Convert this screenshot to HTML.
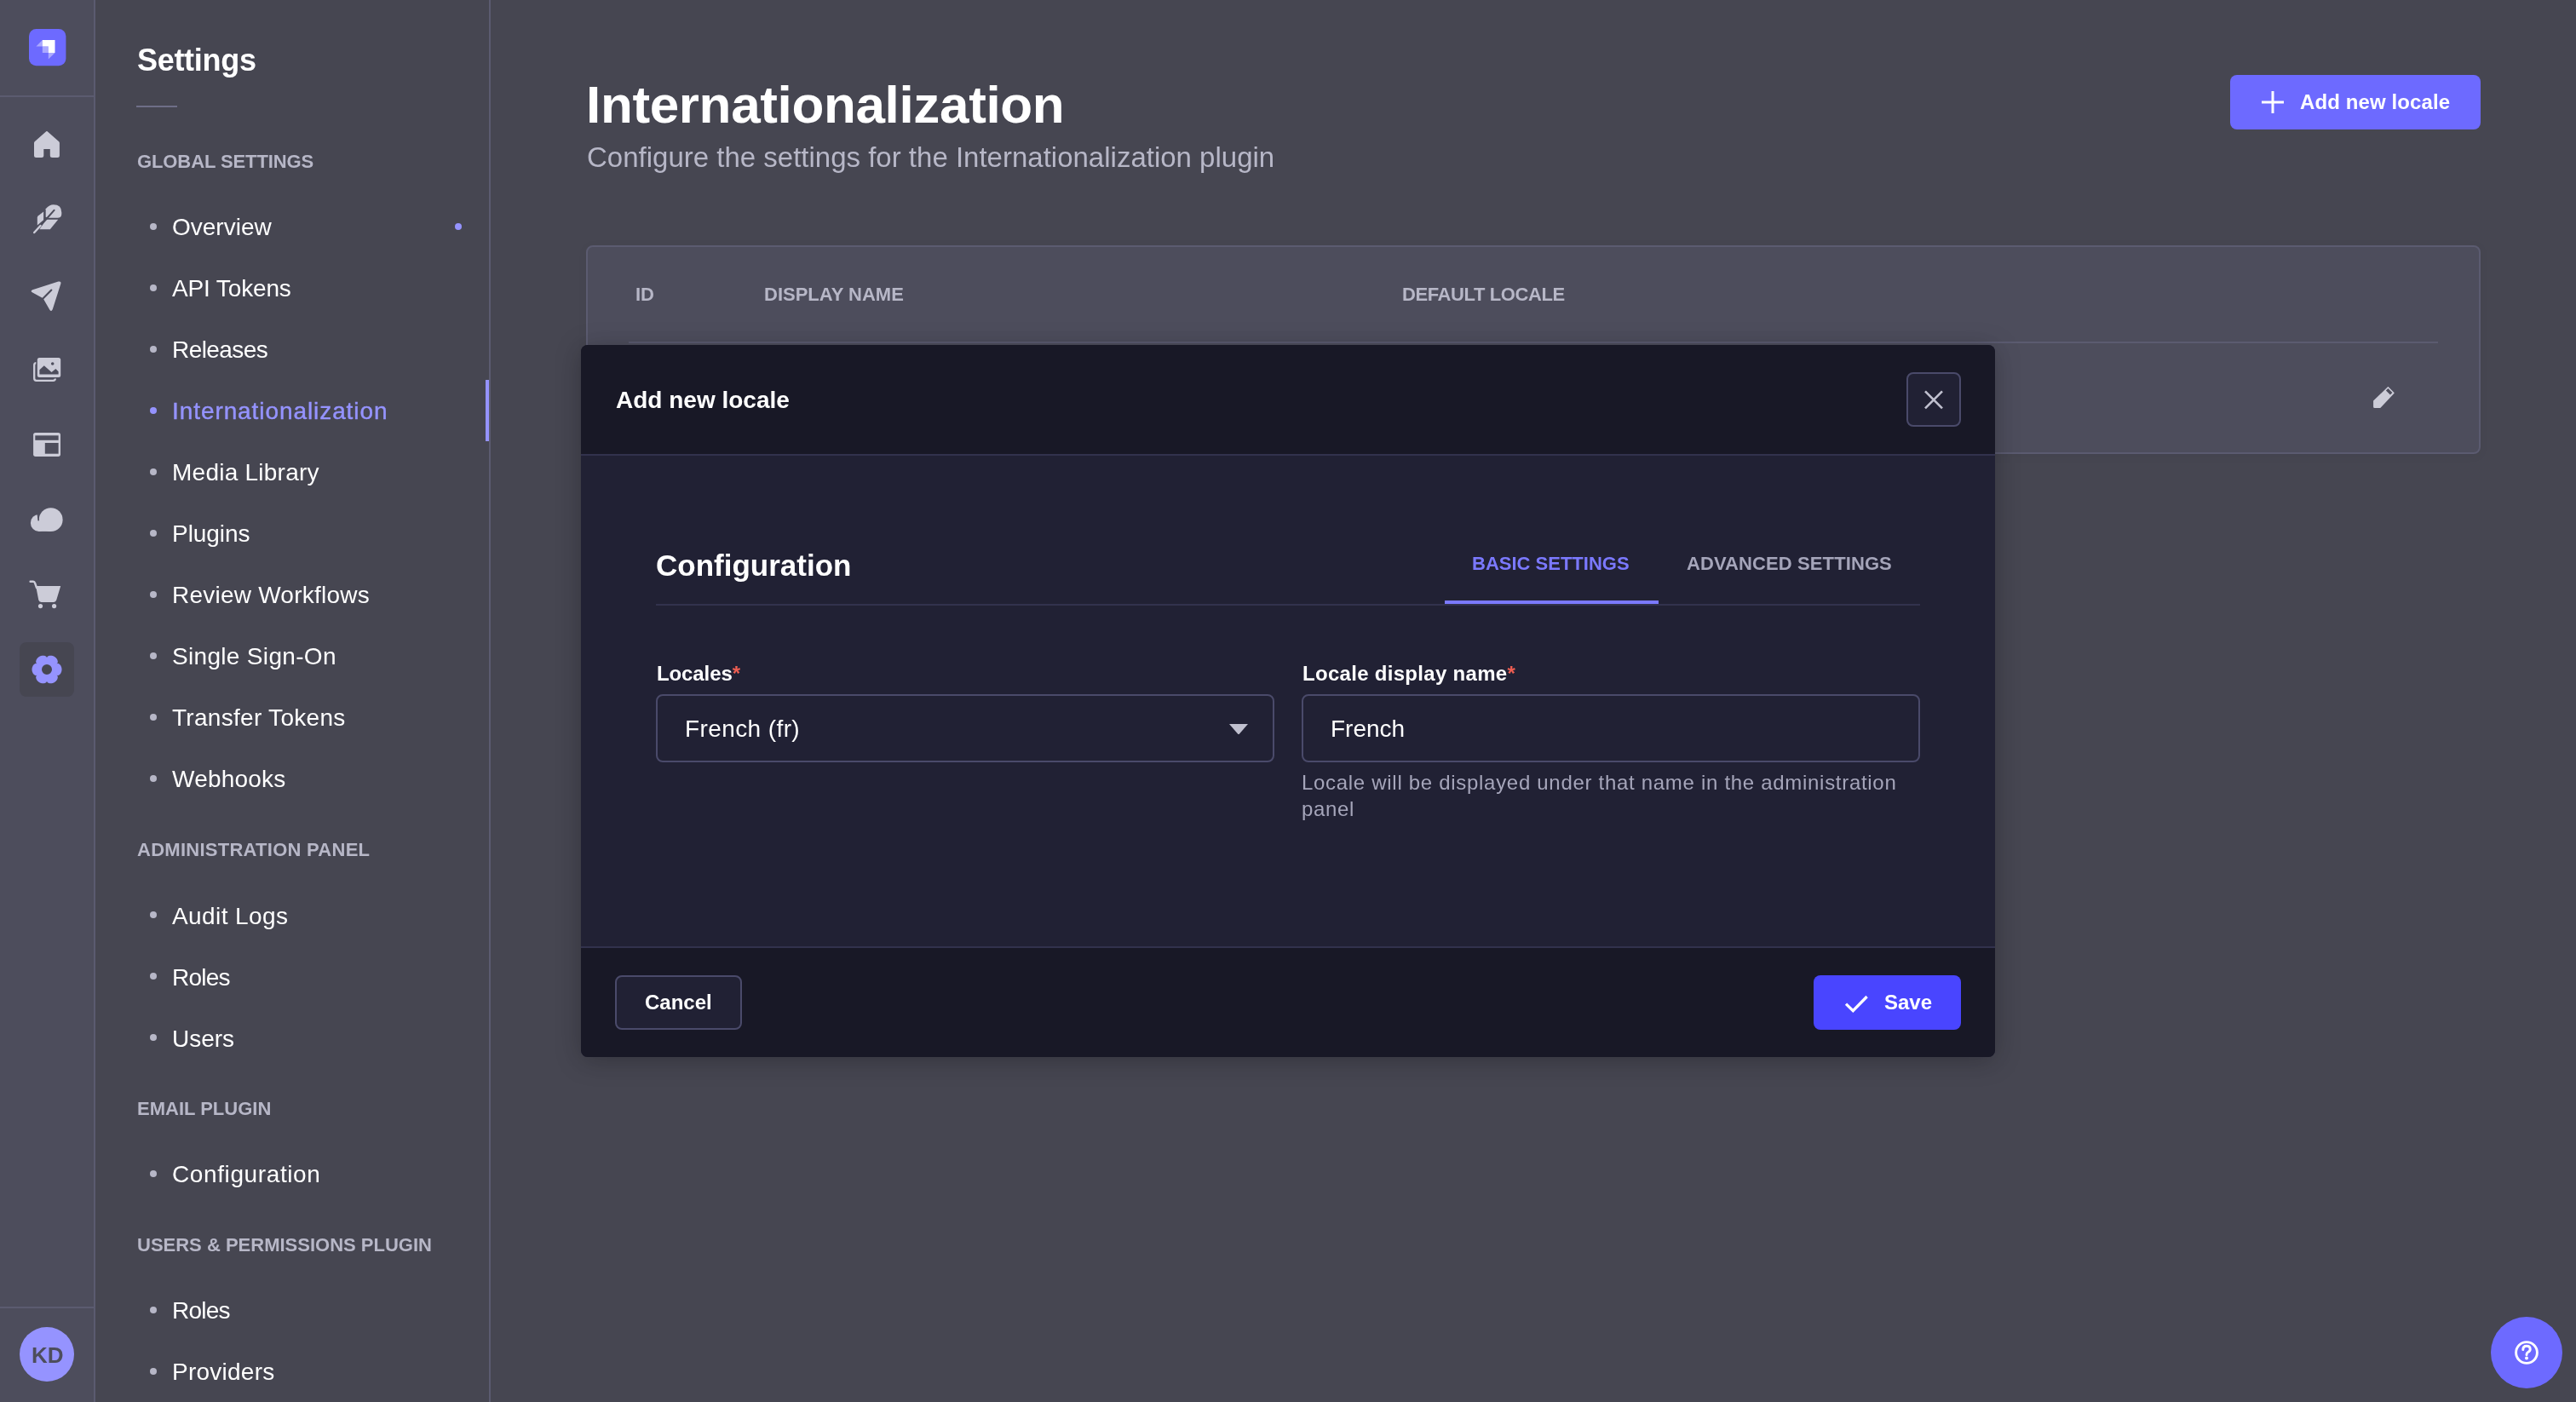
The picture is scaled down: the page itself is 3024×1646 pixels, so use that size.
<!DOCTYPE html>
<html><head><meta charset="utf-8"><title>Internationalization</title>
<style>
html,body{margin:0;padding:0;width:3024px;height:1646px;overflow:hidden;background:#181826}
body{position:relative;font-family:"Liberation Sans",sans-serif}
.t{position:absolute;line-height:1;white-space:nowrap;will-change:transform}
.r{position:absolute;display:block}
</style></head><body>
<div class="r" style="left:0px;top:0px;width:3024px;height:1646px;background:#181826"></div>
<div class="r" style="left:0px;top:0px;width:112px;height:1646px;background:#212134;border-right:2px solid #32324d;box-sizing:border-box"></div>
<div class="r" style="left:0px;top:112px;width:110px;height:2px;background:#32324d"></div>
<div class="r" style="left:0px;top:1534px;width:110px;height:2px;background:#32324d"></div>
<svg class="r" style="left:34px;top:34px" width="44" height="44" viewBox="0 0 44 44">
<rect x="0" y="0" width="43.4" height="43.2" rx="8.5" fill="#4945ff"/>
<path d="M15.8 13 H30.5 V28 H22.8 V20.6 H15.8 Z" fill="#fff"/>
<path d="M15.8 13 V20.6 H8.4 Z" fill="#fff" fill-opacity="0.42"/>
<path d="M15.8 20.6 H22.8 V28 H15.8 Z" fill="#fff" fill-opacity="0.42"/>
<path d="M22.8 28 H30.5 L22.8 35.6 Z" fill="#fff" fill-opacity="0.42"/>
</svg>
<svg class="r" style="left:38px;top:152px" width="34" height="36" viewBox="0 0 34 36">
<path d="M16.3 2.3 Q16.95 1.7 17.6 2.3 L31.2 14.3 Q31.9 15 31.9 16 V30.4 Q31.9 32.9 29.4 32.9 H23.3 Q20.8 32.9 20.8 30.4 V22.9 H13.3 V30.4 Q13.3 32.9 10.8 32.9 H4.5 Q2 32.9 2 30.4 V16 Q2 15 2.7 14.3 Z" fill="#c0c0cf"/>
</svg>
<svg class="r" style="left:38px;top:238px" width="36" height="38" viewBox="0 0 36 38">
<path d="M15.7 16.8 V7.2 Q20 2.3 24.7 2.3 Q34.3 2.3 34.3 11.5 V13 Q34.3 17.7 30 17.7 H19.1 Z" fill="#c0c0cf"/>
<path d="M5.8 17.5 Q5.8 16.2 7 15.2 L13.1 10.6 V20.2 L5.8 26.4 Z" fill="#c0c0cf"/>
<path d="M16.1 19.8 H30.2 L20.8 31.2 H8.4 Z" fill="#c0c0cf"/>
<path d="M8 28.6 L25.5 8.9" stroke="#212134" stroke-width="2.1" stroke-linecap="round"/>
<path d="M2.2 35 L9.5 27" stroke="#c0c0cf" stroke-width="2.4" stroke-linecap="round"/>
</svg>
<svg class="r" style="left:35px;top:328px" width="38" height="38" viewBox="0 0 38 38">
<path d="M2.8 15.2 Q0.3 13.6 3.2 12.2 L33.5 2.6 Q37.2 1.6 36.3 5.2 L26.8 35 Q25.3 38.6 23.2 35.4 L15.6 22.3 Z" fill="#c0c0cf"/>
<path d="M15.2 22.8 L25.3 12.6" stroke="#212134" stroke-width="2.2" stroke-linecap="round"/>
</svg>
<svg class="r" style="left:37px;top:418px" width="36" height="32" viewBox="0 0 36 32">
<rect x="3.2" y="8.2" width="24.7" height="20.6" rx="2.5" stroke="#c0c0cf" stroke-width="2.3" fill="none"/>
<rect x="5.3" y="0.6" width="30.3" height="25.9" rx="3.5" fill="#212134"/>
<rect x="6.8" y="2" width="27.4" height="22.9" rx="2.5" fill="#c0c0cf"/>
<path d="M9.4 21.5 V16.3 L14.8 11.2 L23.5 19 L28.4 15.1 L31.6 18.3 V21.5 Z" fill="#212134"/>
<circle cx="24.7" cy="9" r="1.8" fill="#212134"/>
</svg>
<svg class="r" style="left:38px;top:507px" width="34" height="30" viewBox="0 0 34 30">
<rect x="1.1" y="1" width="31.9" height="27.9" rx="2.6" fill="#c0c0cf"/>
<rect x="3.3" y="4.3" width="27.3" height="5.5" fill="#212134"/>
<rect x="14.8" y="13" width="15.8" height="12.7" fill="#212134"/>
</svg>
<svg class="r" style="left:35px;top:594px" width="40" height="32" viewBox="0 0 40 32">
<ellipse cx="10.6" cy="19.9" rx="9.7" ry="10" fill="#c0c0cf"/>
<path d="M10.1 7 H20 V14 L10.1 17 Z" fill="#212134"/>
<circle cx="24.7" cy="16.2" r="13.9" fill="#c0c0cf"/>
<rect x="10.6" y="17" width="14.1" height="12.9" fill="#c0c0cf"/>
<path d="M9.5 9.6 Q9.8 13.5 10.2 16.8" stroke="#212134" stroke-width="1.6" stroke-linecap="round" fill="none"/>
</svg>
<svg class="r" style="left:33px;top:680px" width="40" height="36" viewBox="0 0 40 36">
<path d="M9.1 8.1 H38.2 L33.2 24.5 Q32.5 26.9 30 26.9 H15.5 Q13 26.9 12.3 24.5 Z" fill="#c0c0cf"/>
<path d="M2.6 2.8 H6 Q7.5 2.8 8 4.5 L10 10" stroke="#c0c0cf" stroke-width="2.4" stroke-linecap="round" fill="none"/>
<circle cx="14.5" cy="31.6" r="2.6" fill="#c0c0cf"/>
<circle cx="30.6" cy="31.6" r="2.6" fill="#c0c0cf"/>
</svg>
<div class="r" style="left:23px;top:754px;width:64px;height:64px;background:#181826;border-radius:8px"></div>
<svg class="r" style="left:36px;top:768px" width="38" height="36" viewBox="0 0 38 36">
<path fill="#7b79ff" fill-rule="evenodd" d="M36.50 18.00 L36.49 18.31 L36.48 18.61 L36.45 18.91 L36.42 19.22 L36.37 19.52 L36.31 19.82 L36.25 20.12 L36.17 20.41 L36.08 20.71 L35.98 20.99 L35.87 21.28 L35.75 21.56 L35.62 21.84 L35.48 22.11 L35.33 22.38 L35.17 22.64 L35.00 22.89 L34.81 23.14 L34.62 23.38 L34.41 23.61 L34.19 23.83 L33.96 24.04 L33.71 24.25 L33.45 24.43 L33.17 24.61 L32.86 24.76 L32.52 24.89 L32.14 24.99 L31.67 25.02 L30.60 24.70 L31.42 25.46 L31.62 25.89 L31.73 26.27 L31.79 26.62 L31.80 26.97 L31.80 27.30 L31.77 27.62 L31.71 27.93 L31.65 28.24 L31.56 28.54 L31.47 28.84 L31.36 29.13 L31.23 29.41 L31.10 29.69 L30.96 29.96 L30.80 30.22 L30.64 30.48 L30.46 30.73 L30.28 30.97 L30.08 31.21 L29.88 31.44 L29.67 31.66 L29.46 31.88 L29.23 32.08 L29.00 32.28 L28.76 32.47 L28.52 32.66 L28.27 32.83 L28.01 33.00 L27.75 33.16 L27.48 33.30 L27.21 33.44 L26.93 33.57 L26.65 33.69 L26.37 33.80 L26.08 33.90 L25.79 33.99 L25.49 34.07 L25.20 34.14 L24.90 34.20 L24.60 34.25 L24.29 34.29 L23.99 34.31 L23.68 34.33 L23.38 34.33 L23.07 34.32 L22.76 34.30 L22.46 34.26 L22.15 34.22 L21.85 34.15 L21.55 34.07 L21.25 33.98 L20.95 33.86 L20.65 33.73 L20.36 33.57 L20.08 33.38 L19.79 33.16 L19.52 32.87 L19.25 32.48 L19.00 31.40 L18.75 32.48 L18.48 32.87 L18.21 33.16 L17.92 33.38 L17.64 33.57 L17.35 33.73 L17.05 33.86 L16.75 33.98 L16.45 34.07 L16.15 34.15 L15.85 34.22 L15.54 34.26 L15.24 34.30 L14.93 34.32 L14.62 34.33 L14.32 34.33 L14.01 34.31 L13.71 34.29 L13.40 34.25 L13.10 34.20 L12.80 34.14 L12.51 34.07 L12.21 33.99 L11.92 33.90 L11.63 33.80 L11.35 33.69 L11.07 33.57 L10.79 33.44 L10.52 33.30 L10.25 33.16 L9.99 33.00 L9.73 32.83 L9.48 32.66 L9.24 32.47 L9.00 32.28 L8.77 32.08 L8.54 31.88 L8.33 31.66 L8.12 31.44 L7.92 31.21 L7.72 30.97 L7.54 30.73 L7.36 30.48 L7.20 30.22 L7.04 29.96 L6.90 29.69 L6.77 29.41 L6.64 29.13 L6.53 28.84 L6.44 28.54 L6.35 28.24 L6.29 27.93 L6.23 27.62 L6.20 27.30 L6.20 26.97 L6.21 26.62 L6.27 26.27 L6.38 25.89 L6.58 25.46 L7.40 24.70 L6.33 25.02 L5.86 24.99 L5.48 24.89 L5.14 24.76 L4.83 24.61 L4.55 24.43 L4.29 24.25 L4.04 24.04 L3.81 23.83 L3.59 23.61 L3.38 23.38 L3.19 23.14 L3.00 22.89 L2.83 22.64 L2.67 22.38 L2.52 22.11 L2.38 21.84 L2.25 21.56 L2.13 21.28 L2.02 20.99 L1.92 20.71 L1.83 20.41 L1.75 20.12 L1.69 19.82 L1.63 19.52 L1.58 19.22 L1.55 18.91 L1.52 18.61 L1.51 18.31 L1.50 18.00 L1.51 17.69 L1.52 17.39 L1.55 17.09 L1.58 16.78 L1.63 16.48 L1.69 16.18 L1.75 15.88 L1.83 15.59 L1.92 15.29 L2.02 15.01 L2.13 14.72 L2.25 14.44 L2.38 14.16 L2.52 13.89 L2.67 13.62 L2.83 13.36 L3.00 13.11 L3.19 12.86 L3.38 12.62 L3.59 12.39 L3.81 12.17 L4.04 11.96 L4.29 11.75 L4.55 11.57 L4.83 11.39 L5.14 11.24 L5.48 11.11 L5.86 11.01 L6.33 10.98 L7.40 11.30 L6.58 10.54 L6.38 10.11 L6.27 9.73 L6.21 9.38 L6.20 9.03 L6.20 8.70 L6.23 8.38 L6.29 8.07 L6.35 7.76 L6.44 7.46 L6.53 7.16 L6.64 6.87 L6.77 6.59 L6.90 6.31 L7.04 6.04 L7.20 5.78 L7.36 5.52 L7.54 5.27 L7.72 5.03 L7.92 4.79 L8.12 4.56 L8.33 4.34 L8.54 4.12 L8.77 3.92 L9.00 3.72 L9.24 3.53 L9.48 3.34 L9.73 3.17 L9.99 3.00 L10.25 2.84 L10.52 2.70 L10.79 2.56 L11.07 2.43 L11.35 2.31 L11.63 2.20 L11.92 2.10 L12.21 2.01 L12.51 1.93 L12.80 1.86 L13.10 1.80 L13.40 1.75 L13.71 1.71 L14.01 1.69 L14.32 1.67 L14.62 1.67 L14.93 1.68 L15.24 1.70 L15.54 1.74 L15.85 1.78 L16.15 1.85 L16.45 1.93 L16.75 2.02 L17.05 2.14 L17.35 2.27 L17.64 2.43 L17.92 2.62 L18.21 2.84 L18.48 3.13 L18.75 3.52 L19.00 4.60 L19.25 3.52 L19.52 3.13 L19.79 2.84 L20.08 2.62 L20.36 2.43 L20.65 2.27 L20.95 2.14 L21.25 2.02 L21.55 1.93 L21.85 1.85 L22.15 1.78 L22.46 1.74 L22.76 1.70 L23.07 1.68 L23.38 1.67 L23.68 1.67 L23.99 1.69 L24.29 1.71 L24.60 1.75 L24.90 1.80 L25.20 1.86 L25.49 1.93 L25.79 2.01 L26.08 2.10 L26.37 2.20 L26.65 2.31 L26.93 2.43 L27.21 2.56 L27.48 2.70 L27.75 2.84 L28.01 3.00 L28.27 3.17 L28.52 3.34 L28.76 3.53 L29.00 3.72 L29.23 3.92 L29.46 4.12 L29.67 4.34 L29.88 4.56 L30.08 4.79 L30.28 5.03 L30.46 5.27 L30.64 5.52 L30.80 5.78 L30.96 6.04 L31.10 6.31 L31.23 6.59 L31.36 6.87 L31.47 7.16 L31.56 7.46 L31.65 7.76 L31.71 8.07 L31.77 8.38 L31.80 8.70 L31.80 9.03 L31.79 9.38 L31.73 9.73 L31.62 10.11 L31.42 10.54 L30.60 11.30 L31.67 10.98 L32.14 11.01 L32.52 11.11 L32.86 11.24 L33.17 11.39 L33.45 11.57 L33.71 11.75 L33.96 11.96 L34.19 12.17 L34.41 12.39 L34.62 12.62 L34.81 12.86 L35.00 13.11 L35.17 13.36 L35.33 13.62 L35.48 13.89 L35.62 14.16 L35.75 14.44 L35.87 14.72 L35.98 15.01 L36.08 15.29 L36.17 15.59 L36.25 15.88 L36.31 16.18 L36.37 16.48 L36.42 16.78 L36.45 17.09 L36.48 17.39 L36.49 17.69 Z M25 18 A6 6 0 1 0 13 18 A6 6 0 1 0 25 18 Z"/>
</svg>
<div class="r" style="left:23px;top:1558px;width:64px;height:64px;background:#7b79ff;border-radius:50%"></div>
<div class="t" style="left:37.0px;top:1578.0px;font-size:26px;font-weight:700;color:#212134;letter-spacing:0px;">KD</div>
<div class="r" style="left:112px;top:0px;width:464px;height:1646px;background:#181826;border-right:2px solid #32324d;box-sizing:border-box"></div>
<div class="t" style="left:160.5px;top:53.1px;font-size:36px;font-weight:700;color:#fff;letter-spacing:-0.3px;">Settings</div>
<div class="r" style="left:160px;top:124px;width:48px;height:2px;background:#4a4a6a"></div>
<div class="t" style="left:161.0px;top:178.7px;font-size:22px;font-weight:700;color:#a5a5ba;letter-spacing:-0.1px;">GLOBAL SETTINGS</div>
<div class="r" style="left:176px;top:262px;width:8px;height:8px;background:#a5a5ba;border-radius:50%"></div>
<div class="t" style="left:201.5px;top:252.8px;font-size:28px;font-weight:400;color:#fff;letter-spacing:0px;">Overview</div>
<div class="r" style="left:176px;top:334px;width:8px;height:8px;background:#a5a5ba;border-radius:50%"></div>
<div class="t" style="left:201.5px;top:324.8px;font-size:28px;font-weight:400;color:#fff;letter-spacing:-0.14px;">API Tokens</div>
<div class="r" style="left:176px;top:406px;width:8px;height:8px;background:#a5a5ba;border-radius:50%"></div>
<div class="t" style="left:201.5px;top:396.8px;font-size:28px;font-weight:400;color:#fff;letter-spacing:-0.57px;">Releases</div>
<div class="r" style="left:176px;top:478px;width:8px;height:8px;background:#7b79ff;border-radius:50%"></div>
<div class="t" style="left:201.5px;top:468.8px;font-size:28px;font-weight:400;color:#7b79ff;letter-spacing:0.92px;-webkit-text-stroke:0.45px #7b79ff;">Internationalization</div>
<div class="r" style="left:176px;top:550px;width:8px;height:8px;background:#a5a5ba;border-radius:50%"></div>
<div class="t" style="left:201.5px;top:540.8px;font-size:28px;font-weight:400;color:#fff;letter-spacing:0.24px;">Media Library</div>
<div class="r" style="left:176px;top:622px;width:8px;height:8px;background:#a5a5ba;border-radius:50%"></div>
<div class="t" style="left:201.5px;top:612.8px;font-size:28px;font-weight:400;color:#fff;letter-spacing:-0.05px;">Plugins</div>
<div class="r" style="left:176px;top:694px;width:8px;height:8px;background:#a5a5ba;border-radius:50%"></div>
<div class="t" style="left:201.5px;top:684.8px;font-size:28px;font-weight:400;color:#fff;letter-spacing:0.23px;">Review Workflows</div>
<div class="r" style="left:176px;top:766px;width:8px;height:8px;background:#a5a5ba;border-radius:50%"></div>
<div class="t" style="left:201.5px;top:756.8px;font-size:28px;font-weight:400;color:#fff;letter-spacing:0.32px;">Single Sign-On</div>
<div class="r" style="left:176px;top:838px;width:8px;height:8px;background:#a5a5ba;border-radius:50%"></div>
<div class="t" style="left:201.5px;top:828.8px;font-size:28px;font-weight:400;color:#fff;letter-spacing:0.29px;">Transfer Tokens</div>
<div class="r" style="left:176px;top:910px;width:8px;height:8px;background:#a5a5ba;border-radius:50%"></div>
<div class="t" style="left:201.5px;top:900.8px;font-size:28px;font-weight:400;color:#fff;letter-spacing:0.21px;">Webhooks</div>
<div class="r" style="left:534px;top:262px;width:8px;height:8px;background:#7b79ff;border-radius:50%"></div>
<div class="r" style="left:570px;top:446px;width:4px;height:72px;background:#7b79ff"></div>
<div class="t" style="left:161.0px;top:987.2px;font-size:22px;font-weight:700;color:#a5a5ba;letter-spacing:0.26px;">ADMINISTRATION PANEL</div>
<div class="r" style="left:176px;top:1070px;width:8px;height:8px;background:#a5a5ba;border-radius:50%"></div>
<div class="t" style="left:201.5px;top:1061.5px;font-size:28px;font-weight:400;color:#fff;letter-spacing:0.41px;">Audit Logs</div>
<div class="r" style="left:176px;top:1142px;width:8px;height:8px;background:#a5a5ba;border-radius:50%"></div>
<div class="t" style="left:201.5px;top:1133.5px;font-size:28px;font-weight:400;color:#fff;letter-spacing:-0.75px;">Roles</div>
<div class="r" style="left:176px;top:1214px;width:8px;height:8px;background:#a5a5ba;border-radius:50%"></div>
<div class="t" style="left:201.5px;top:1205.5px;font-size:28px;font-weight:400;color:#fff;letter-spacing:-0.03px;">Users</div>
<div class="t" style="left:161.0px;top:1290.6px;font-size:22px;font-weight:700;color:#a5a5ba;letter-spacing:0px;">EMAIL PLUGIN</div>
<div class="r" style="left:176px;top:1374px;width:8px;height:8px;background:#a5a5ba;border-radius:50%"></div>
<div class="t" style="left:201.5px;top:1364.9px;font-size:28px;font-weight:400;color:#fff;letter-spacing:0.61px;">Configuration</div>
<div class="t" style="left:161.0px;top:1450.8px;font-size:22px;font-weight:700;color:#a5a5ba;letter-spacing:0px;">USERS &amp; PERMISSIONS PLUGIN</div>
<div class="r" style="left:176px;top:1534px;width:8px;height:8px;background:#a5a5ba;border-radius:50%"></div>
<div class="t" style="left:201.5px;top:1525.2px;font-size:28px;font-weight:400;color:#fff;letter-spacing:-0.75px;">Roles</div>
<div class="r" style="left:176px;top:1606px;width:8px;height:8px;background:#a5a5ba;border-radius:50%"></div>
<div class="t" style="left:201.5px;top:1597.2px;font-size:28px;font-weight:400;color:#fff;letter-spacing:0.25px;">Providers</div>
<div class="t" style="left:688.0px;top:91.8px;font-size:62px;font-weight:700;color:#fff;letter-spacing:-0.35px;">Internationalization</div>
<div class="t" style="left:689.0px;top:168.2px;font-size:33px;font-weight:400;color:#a5a5ba;letter-spacing:0px;">Configure the settings for the Internationalization plugin</div>
<div class="r" style="left:2618px;top:88px;width:294px;height:64px;background:#4945ff;border-radius:8px"></div>
<svg class="r" style="left:2654px;top:106px" width="28" height="28" viewBox="0 0 28 28">
<path d="M14 1 V27 M1 14 H27" stroke="#fff" stroke-width="3"/></svg>
<div class="t" style="left:2700.0px;top:107.7px;font-size:24px;font-weight:700;color:#fff;letter-spacing:0.1px;">Add new locale</div>
<div class="r" style="left:688px;top:288px;width:2224px;height:245px;background:#212134;border:2px solid #32324d;border-radius:8px;box-sizing:border-box;box-shadow:0 2px 8px rgba(0,0,0,0.1)"></div>
<div class="t" style="left:746.0px;top:335.1px;font-size:22px;font-weight:700;color:#a5a5ba;letter-spacing:0px;">ID</div>
<div class="t" style="left:896.5px;top:335.1px;font-size:22px;font-weight:700;color:#a5a5ba;letter-spacing:0px;">DISPLAY NAME</div>
<div class="t" style="left:1645.5px;top:334.9px;font-size:22px;font-weight:700;color:#a5a5ba;letter-spacing:-0.4px;">DEFAULT LOCALE</div>
<div class="r" style="left:738px;top:401px;width:2124px;height:2px;background:#32324d"></div>
<svg class="r" style="left:2784px;top:452px" width="28" height="28" viewBox="0 0 28 28">
<path d="M18.7 2.4 Q19.4 1.7 20.1 2.4 L26.3 8.7 Q27 9.4 26.3 10.1 L10.3 26.9 H3.6 Q2.1 26.9 2.1 25.4 V18.6 Z M19.4 4.1 L24.4 9.1 L21.9 11.6 L16.9 6.6 Z" fill="#c0c0cf" fill-rule="evenodd"/></svg>
<div class="r" style="left:2924px;top:1546px;width:84px;height:84px;background:#4945ff;border-radius:50%"></div>
<svg class="r" style="left:2950px;top:1572px" width="32" height="32" viewBox="0 0 32 32">
<circle cx="16" cy="16" r="12.4" stroke="#fff" stroke-width="2.9" fill="none"/>
<path d="M11.8 12.5 Q11.8 8.3 16 8.3 Q20.2 8.3 20.2 12 Q20.2 14.3 17.6 15.5 Q16 16.2 16 18.5" stroke="#fff" stroke-width="3" fill="none" stroke-linecap="round"/>
<circle cx="16" cy="22.6" r="2" fill="#fff"/></svg>
<div class="r" style="left:0px;top:0px;width:3024px;height:1646px;background:rgba(255,255,255,0.2)"></div>
<div class="r" style="left:682px;top:405px;width:1660px;height:836px;background:#212134;border-radius:8px;box-shadow:0 4px 30px rgba(0,0,0,0.25)"></div>
<div class="r" style="left:682px;top:405px;width:1660px;height:128px;background:#181826;border-radius:8px 8px 0 0"></div>
<div class="r" style="left:682px;top:533px;width:1660px;height:2px;background:#32324d"></div>
<div class="t" style="left:722.5px;top:455.6px;font-size:28px;font-weight:700;color:#fff;letter-spacing:0px;">Add new locale</div>
<div class="r" style="left:2238px;top:437px;width:64px;height:64px;background:#212134;border:2px solid #4a4a6a;border-radius:8px;box-sizing:border-box"></div>
<svg class="r" style="left:2257px;top:456px" width="26" height="26" viewBox="0 0 26 26">
<path d="M3 3.3 L23 23.3 M23 3.3 L3 23.3" stroke="#c0c0cf" stroke-width="2.6"/></svg>
<div class="t" style="left:770.0px;top:645.7px;font-size:35px;font-weight:700;color:#fff;letter-spacing:0px;">Configuration</div>
<div class="r" style="left:770px;top:709px;width:1484px;height:2px;background:#32324d"></div>
<div class="r" style="left:1696px;top:705px;width:251px;height:4px;background:#7b79ff"></div>
<div class="t" style="left:1728.0px;top:650.5px;font-size:22px;font-weight:700;color:#7b79ff;letter-spacing:0px;">BASIC SETTINGS</div>
<div class="t" style="left:1980.0px;top:650.5px;font-size:22px;font-weight:700;color:#a5a5ba;letter-spacing:0.1px;">ADVANCED SETTINGS</div>
<div class="t" style="left:770.5px;top:778.8px;font-size:24px;font-weight:700;color:#fff;letter-spacing:-0.1px;">Locales<span style="color:#ee5e52">*</span></div>
<div class="r" style="left:770px;top:815px;width:726px;height:80px;background:#212134;border:2px solid #4a4a6a;border-radius:8px;box-sizing:border-box"></div>
<div class="t" style="left:803.5px;top:841.6px;font-size:28px;font-weight:400;color:#fff;letter-spacing:0.4px;">French (fr)</div>
<svg class="r" style="left:1442px;top:849px" width="24" height="14" viewBox="0 0 24 14">
<path d="M1 1 H23 L13 12.5 Q12 13.5 11 12.5 Z" fill="#c0c0cf"/></svg>
<div class="t" style="left:1528.5px;top:778.8px;font-size:24px;font-weight:700;color:#fff;letter-spacing:0.3px;">Locale display name<span style="color:#ee5e52">*</span></div>
<div class="r" style="left:1528px;top:815px;width:726px;height:80px;background:#212134;border:2px solid #4a4a6a;border-radius:8px;box-sizing:border-box"></div>
<div class="t" style="left:1562.0px;top:841.6px;font-size:28px;font-weight:400;color:#fff;letter-spacing:0px;">French</div>
<div class="t" style="left:1528.0px;top:906.5px;font-size:24px;font-weight:400;color:#a5a5ba;letter-spacing:0.7px;">Locale will be displayed under that name in the administration</div>
<div class="t" style="left:1528.0px;top:938.1px;font-size:24px;font-weight:400;color:#a5a5ba;letter-spacing:0.66px;">panel</div>
<div class="r" style="left:682px;top:1111px;width:1660px;height:2px;background:#32324d"></div>
<div class="r" style="left:682px;top:1113px;width:1660px;height:128px;background:#181826;border-radius:0 0 8px 8px"></div>
<div class="r" style="left:722px;top:1145px;width:149px;height:64px;background:#212134;border:2px solid #4a4a6a;border-radius:8px;box-sizing:border-box"></div>
<div class="t" style="left:756.5px;top:1164.9px;font-size:24px;font-weight:700;color:#fff;letter-spacing:0px;">Cancel</div>
<div class="r" style="left:2129px;top:1145px;width:173px;height:64px;background:#4945ff;border-radius:8px"></div>
<svg class="r" style="left:2164px;top:1166px" width="31" height="24" viewBox="0 0 31 24">
<path d="M3 12.6 L11.3 20.6 L27.6 4" stroke="#fff" stroke-width="3.3" fill="none"/></svg>
<div class="t" style="left:2212.0px;top:1164.8px;font-size:24px;font-weight:700;color:#fff;letter-spacing:0px;">Save</div>
</body></html>
